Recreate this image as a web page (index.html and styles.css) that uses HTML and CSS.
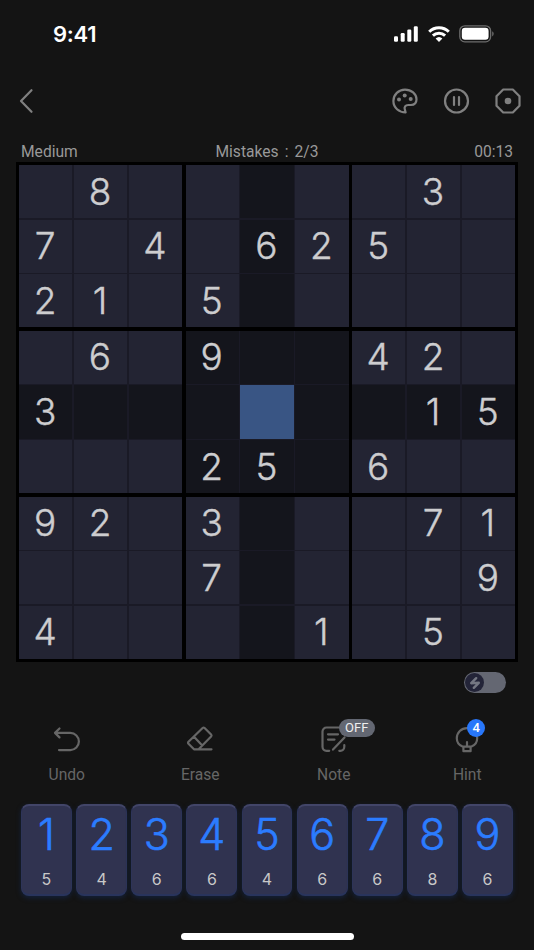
FILE: index.html
```html
<!DOCTYPE html>
<html lang="en">

<head>
    <meta charset="UTF-8">
    <meta name="viewport" content="width=device-width, initial-scale=1.0">
    <title>Sudoku</title>
    <link rel="stylesheet" href="styles.css">
</head>

<body>

    <div class="status-bar">
        <span class="clock">9:41</span>
        <div class="status-icons">
            <svg width="24" height="16" viewBox="0 0 24 16" fill="#fff">
                <rect x="0" y="10.2" width="4" height="5.6" rx="1.2"/>
                <rect x="6.7" y="7" width="4" height="8.8" rx="1.2"/>
                <rect x="13.3" y="3.6" width="4" height="12.2" rx="1.2"/>
                <rect x="19.8" y="0.2" width="4" height="15.6" rx="1.2"/>
            </svg>
            <svg class="wifi" width="22" height="16" viewBox="0 0 22 16" fill="none" stroke="#fff" stroke-width="3">
                <path d="M1.2 5.7a14 14 0 0 1 19.6 0"/>
                <path d="M4.9 9.6a8.8 8.8 0 0 1 12.2 0"/>
                <path d="M11 16L7.6 12.6a5 5 0 0 1 6.8 0z" fill="#fff" stroke="none"/>
            </svg>
            <svg width="36" height="18" viewBox="0 0 36 18">
                <rect x="0.8" y="0.8" width="30.8" height="16" rx="5" fill="none" stroke="#6c6c6c" stroke-width="1.3"/>
                <rect x="2.8" y="2.8" width="26.8" height="12" rx="3.2" fill="#fff"/>
                <path d="M33.2 6.2a3 3 0 0 1 0 5.2z" fill="#6c6c6c"/>
            </svg>
        </div>
    </div>

    <div class="toolbar">
        <svg class="back" width="16" height="26" viewBox="0 0 16 26">
            <path d="M13.5 2.2L3 13l10.5 10.8"/>
        </svg>
        <div class="tools">
            <svg width="26" height="26" viewBox="0 0 26 26">
                <path d="M13.6 24.4C7 24.4 1.4 19.8 1.4 13 1.4 6.6 6.6 1.6 13 1.6c6.3 0 11.5 4.2 11.5 9.7 0 4-2.7 5.7-5.6 5.7h-2.7c-2.9 0-4.2 2.2-3.4 4.3z"/>
                <circle class="dot" cx="7" cy="11.5" r="2"/>
                <circle class="dot" cx="12.7" cy="7.5" r="2"/>
                <circle class="dot" cx="18.7" cy="11" r="2"/>
            </svg>
            <svg width="26" height="26" viewBox="0 0 26 26">
                <circle cx="12.5" cy="13" r="11.5"/>
                <path d="M10 9v8M15 9v8"/>
            </svg>
            <svg width="26" height="26" viewBox="0 0 26 26">
                <path d="M8.2 1.5h9.6l6.7 6.7v9.6l-6.7 6.7H8.2l-6.7-6.7V8.2z"/>
                <circle class="dot" cx="13" cy="13" r="3.3"/>
            </svg>
        </div>
    </div>

    <div class="info">
        <span>Medium</span>
        <span class="mistakes">Mistakes<i>:</i>2/3</span>
        <span class="timer">00:13</span>
    </div>

    <div class="board" id="board"></div>

    <div class="switch-row">
        <div class="switch">
            <div class="knob">
                <svg width="10" height="12" viewBox="0 0 10 12">
                    <path d="M6.2 1.2L1.2 6.2 8.8 5.8 3.8 10.8"/>
                </svg>
            </div>
        </div>
    </div>

    <div class="actions">
        <div class="action">
            <div class="icon">
                <svg width="28" height="28" viewBox="0 0 28 28">
                    <path d="M6.5 2.5L2 6.9l4.5 4.5M2.5 6.9H17.3a8.6 8.6 0 0 1 0 17.2H6"/>
                </svg>
            </div>
            <span>Undo</span>
        </div>
        <div class="action">
            <div class="icon">
                <svg width="28" height="28" viewBox="0 0 28 28">
                    <path d="M25.5 23.3H8L2.5 17.7q-1-1 0-2L16.6 2q1-.9 2 0l6.5 6.6q.9 1 0 2L12.6 23.3M8 10.8l8 8.5"/>
                </svg>
            </div>
            <span>Erase</span>
        </div>
        <div class="action">
            <div class="icon">
                <svg width="28" height="28" viewBox="0 0 28 28">
                    <path d="M9.2 24.8H6.5a4 4 0 0 1-4-4V5.5a4 4 0 0 1 4-4h13a4 4 0 0 1 4 4M8 8.3h10M8 13.6h6.5M13 23.6L24.5 11.5M24.3 19v1.8a4 4 0 0 1-4 4h-1"/>
                </svg>
                <span class="badge off">OFF</span>
            </div>
            <span>Note</span>
        </div>
        <div class="action">
            <div class="icon">
                <svg width="28" height="28" viewBox="0 0 28 28">
                    <path d="M9.5 20.6C5.8 19 3.8 16 3.8 12.3a10.2 10.2 0 0 1 20.4 0c0 3.7-2 6.7-5.7 8.3M9.5 20.6h9M10.4 20.8v4.4h7.2v-4.4M14 16.2v4"/>
                </svg>
                <span class="badge count">4</span>
            </div>
            <span>Hint</span>
        </div>
    </div>

    <div class="keypad" id="keypad"></div>

    <div class="home-bar"></div>

    <script src="script.js"></script>
</body>

</html>
```

FILE: styles.css
```css
* {
    box-sizing: border-box;
}

body {
    margin: 0;
    height: 950px;
    overflow: hidden;
    background-color: #141414;
    color: #999;
    font-family: Roboto, Arial, sans-serif;
    display: flex;
    flex-direction: column;
}

svg {
    display: block;
    overflow: visible;
}

.status-bar {
    height: 68px;
    padding: 0 39px 0 53px;
    display: flex;
    justify-content: space-between;
    align-items: center;
}

.clock {
    color: #fff;
    font-family: Inter, sans-serif;
    font-size: 22px;
    font-weight: 600;
    letter-spacing: -0.3px;
}

.status-icons {
    display: flex;
    align-items: center;
}

.status-icons .wifi {
    margin: 0 9px 0 10px;
}

.toolbar {
    height: 66px;
    padding: 0 13px 0 18px;
    display: flex;
    justify-content: space-between;
    align-items: center;
}

.toolbar svg {
    fill: none;
    stroke: #808080;
    stroke-width: 2.2;
    stroke-linecap: round;
    stroke-linejoin: round;
}

.toolbar .dot {
    fill: #808080;
    stroke: none;
}

.tools {
    display: flex;
    gap: 25.5px;
}

.info {
    height: 28px;
    padding: 8px 21px 0;
    display: grid;
    grid-template-columns: 1fr auto 1fr;
    font-size: 15.6px;
    line-height: 20px;
}

.info i {
    display: inline-block;
    width: 16px;
    text-align: center;
    font-style: normal;
}

.timer {
    text-align: right;
}

.board {
    width: 502px;
    height: 500px;
    margin-left: 16px;
    padding: 3px;
    background-color: #000;
    display: grid;
    grid-template-columns: repeat(3, 1fr);
    grid-template-rows: repeat(3, 1fr);
    gap: 3.5px;
}

.block {
    background-color: #1a1a26;
    display: grid;
    grid-template-columns: repeat(3, 1fr);
    grid-template-rows: repeat(3, 1fr);
    gap: 1.4px;
}

.cell {
    background-color: #232433;
    color: #cdcdcf;
    font-family: Inter, sans-serif;
    font-size: 37px;
    font-weight: 300;
    -webkit-text-stroke: 0.4px #cdcdcf;
    padding: 0 1px 1px 0;
    display: flex;
    align-items: center;
    justify-content: center;
    line-height: 1;
    min-height: 0;
}

.cell.related {
    background-color: #14151c;
}

.cell.selected {
    background-color: #395584;
}

.switch-row {
    height: 42px;
    padding: 10px 28.5px 0 0;
    display: flex;
    justify-content: flex-end;
}

.switch {
    width: 41.5px;
    height: 21px;
    padding: 1px;
    border-radius: 11px;
    background-color: #646772;
}

.knob {
    width: 19px;
    height: 19px;
    border-radius: 50%;
    background-color: #232438;
    display: flex;
    align-items: center;
    justify-content: center;
}

.knob path {
    fill: none;
    stroke: #747782;
    stroke-width: 2.4;
    stroke-linejoin: round;
    stroke-linecap: round;
}

.actions {
    height: 100px;
    padding-top: 22px;
    display: grid;
    grid-template-columns: repeat(4, 1fr);
}

.action {
    display: flex;
    flex-direction: column;
    align-items: center;
    gap: 11px;
    color: #666;
    font-size: 15.6px;
    line-height: 20px;
}

.icon {
    position: relative;
}

.icon path {
    fill: none;
    stroke: #666;
    stroke-width: 2.2;
    stroke-linecap: round;
    stroke-linejoin: round;
}

.badge {
    position: absolute;
    top: -7px;
    height: 18px;
    border-radius: 9px;
    line-height: 18px;
    text-align: center;
    color: #eee;
    font-size: 13px;
}

.badge.off {
    left: 19px;
    width: 36px;
    background-color: #636772;
}

.badge.count {
    left: 14px;
    width: 18px;
    background-color: #2877fb;
    color: #fff;
    font-weight: 500;
}

.keypad {
    height: 92px;
    margin: 0 21px;
    display: grid;
    grid-template-columns: repeat(9, 1fr);
    gap: 4.2px;
}

.key {
    border: 1px solid #2d3458;
    border-top: 2px solid #424568;
    border-bottom: 2px solid #29345c;
    border-radius: 8px;
    background-color: #303350;
    box-shadow: 0 2px 5px #14213a;
    display: flex;
    flex-direction: column;
    align-items: center;
    font-family: Inter, sans-serif;
}

.key b {
    color: #2b7cff;
    font-size: 43px;
    font-weight: 300;
    -webkit-text-stroke: 0.6px #2b7cff;
    line-height: 57px;
}

.key small {
    margin-top: 6px;
    color: #c8c8c8;
    font-size: 16px;
    line-height: 20px;
}

.home-bar {
    width: 173px;
    height: 7px;
    margin: 36.5px auto 0;
    border-radius: 4px;
    background-color: #fff;
}
```

FILE: script.js
```javascript
const puzzle = [
    ".8.....3.",
    "7.4.625..",
    "21.5.....",
    ".6.9..42.",
    "3......15",
    "...25.6..",
    "92.3...71",
    "...7....9",
    "4....1.5."
];
const remaining = [5, 4, 6, 6, 4, 6, 6, 8, 6];
const selected = { row: 4, col: 4 };

function blockOf(row, col) {
    return Math.floor(row / 3) * 3 + Math.floor(col / 3);
}

// Draw the 9 blocks with their 9 cells
function drawBoard() {
    const board = document.getElementById('board');
    for (let b = 0; b < 9; b++) {
        const block = document.createElement('div');
        block.className = 'block';
        for (let i = 0; i < 9; i++) {
            const row = Math.floor(b / 3) * 3 + Math.floor(i / 3);
            const col = (b % 3) * 3 + i % 3;
            const cell = document.createElement('div');
            cell.className = 'cell';
            if (row === selected.row && col === selected.col) {
                cell.classList.add('selected');
            } else if (row === selected.row || col === selected.col || b === blockOf(selected.row, selected.col)) {
                cell.classList.add('related');
            }
            if (puzzle[row][col] !== '.') {
                cell.textContent = puzzle[row][col];
            }
            block.appendChild(cell);
        }
        board.appendChild(block);
    }
}

// Number keys with how many are left of each
function drawKeypad() {
    const keypad = document.getElementById('keypad');
    remaining.forEach(function (count, i) {
        const key = document.createElement('div');
        key.className = 'key';
        key.innerHTML = '<b>' + (i + 1) + '</b><small>' + count + '</small>';
        keypad.appendChild(key);
    });
}

drawBoard();
drawKeypad();
```
